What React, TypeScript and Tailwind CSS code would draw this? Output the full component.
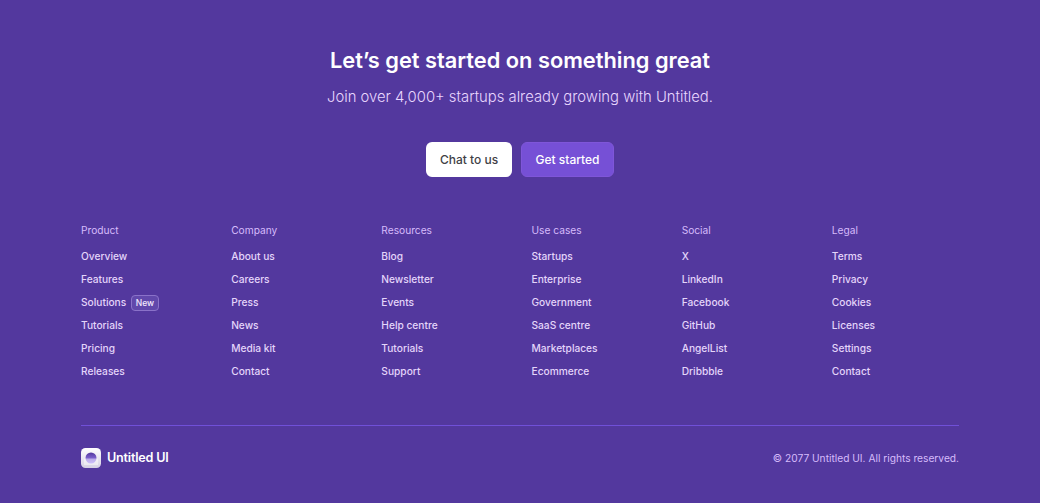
import type { ReactNode } from 'react';

const columns = [
  {
    title: 'Product',
    links: ['Overview', 'Features', 'Solutions', 'Tutorials', 'Pricing', 'Releases'],
  },
  {
    title: 'Company',
    links: ['About us', 'Careers', 'Press', 'News', 'Media kit', 'Contact'],
  },
  {
    title: 'Resources',
    links: ['Blog', 'Newsletter', 'Events', 'Help centre', 'Tutorials', 'Support'],
  },
  {
    title: 'Use cases',
    links: ['Startups', 'Enterprise', 'Government', 'SaaS centre', 'Marketplaces', 'Ecommerce'],
  },
  {
    title: 'Social',
    links: ['X', 'LinkedIn', 'Facebook', 'GitHub', 'AngelList', 'Dribbble'],
  },
  {
    title: 'Legal',
    links: ['Terms', 'Privacy', 'Cookies', 'Licenses', 'Settings', 'Contact'],
  },
];

function Logo() {
  return (
    <svg width="20" height="20" viewBox="0 0 20 20" className="block">
      <defs>
        <linearGradient id="tile" x1="0" y1="0" x2="0" y2="1">
          <stop offset="0" stopColor="#ffffff" />
          <stop offset="1" stopColor="#d5d0e4" />
        </linearGradient>
        <linearGradient id="ball" x1="0" y1="0" x2="0" y2="1">
          <stop offset="0" stopColor="#53389e" />
          <stop offset="1" stopColor="#a48afb" />
        </linearGradient>
      </defs>
      <rect width="20" height="20" rx="4.5" fill="url(#tile)" />
      <circle cx="10" cy="10" r="5.5" fill="url(#ball)" />
      <path d="M3 10.5h14V17H3z" fill="#ffffff" fillOpacity="0.45" />
    </svg>
  );
}

function FooterLink({ children }: { children: ReactNode }) {
  return (
    <li className="flex h-[23px] items-center gap-[5px] text-[10.2px] font-medium text-[#e4d5fa]">
      {children}
    </li>
  );
}

export default function App() {
  return (
    <div className="min-h-[503px] bg-[#53389e] font-['Inter',sans-serif]">
      {/* CTA */}
      <section className="flex flex-col items-center pt-[44px]">
        <h2 className="text-[21.8px] leading-[32px] font-semibold text-white">
          Let’s get started on something great
        </h2>
        <p className="mt-[9px] text-[14.8px] leading-[24px] font-light text-[#e9d7fe]">
          Join over 4,000+ startups already growing with Untitled.
        </p>
        <div className="mt-[33px] flex gap-[9px]">
          <button className="h-[35px] w-[86px] rounded-[6px] bg-white text-[12px] font-medium text-[#3f3f46]">
            Chat to us
          </button>
          <button className="h-[35px] w-[93px] rounded-[6px] border border-[#7f56d9] bg-[#7650d6] text-[12px] font-medium text-white">
            Get started
          </button>
        </div>
      </section>

      {/* Links */}
      <footer className="mx-[81px] mt-[43px]">
        <div className="grid grid-cols-6 gap-[23px]">
          {columns.map((col) => (
            <div key={col.title}>
              <h3 className="text-[10.2px] leading-[20px] font-normal text-[#d6bbfb]">
                {col.title}
              </h3>
              <ul className="mt-[5px]">
                {col.links.map((link) => (
                  <FooterLink key={link}>
                    {link}
                    {link === 'Solutions' && (
                      <span className="rounded-[4px] border border-[#8a72c9] bg-[#6148ab] px-[3.5px] text-[8.5px] leading-[14px] font-medium text-[#f4ebff]">
                        New
                      </span>
                    )}
                  </FooterLink>
                ))}
              </ul>
            </div>
          ))}
        </div>

        {/* Bottom bar */}
        <div className="mt-[42px] flex items-center justify-between border-t border-[#7050d8] pt-[22px]">
          <div className="flex items-center gap-[6px]">
            <Logo />
            <span className="pt-[1px] text-[12.6px] font-semibold tracking-[-0.2px] text-white">
              Untitled UI
            </span>
          </div>
          <p className="pt-[1px] text-[10.2px] text-[#d6bbfb]">
            © 2077 Untitled UI. All rights reserved.
          </p>
        </div>
      </footer>
    </div>
  );
}
